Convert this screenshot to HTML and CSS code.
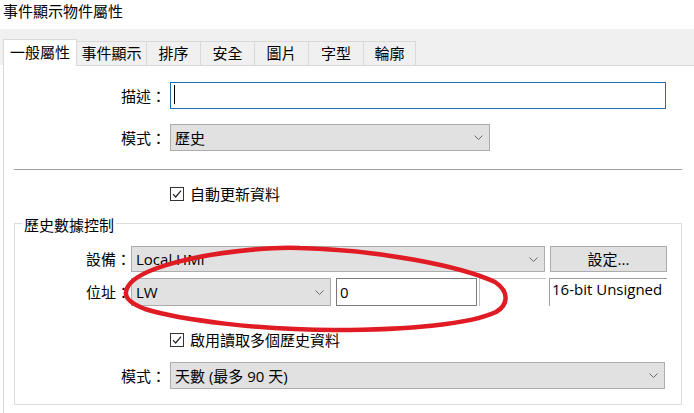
FILE: index.html
```html
<!doctype html>
<html>
   <head>
      <meta charset="utf-8">
      <title>事件顯示物件屬性</title>
      <link rel="stylesheet" href="styles.css">
   </head>
   <body>
      <div class="dialog-title">事件顯示物件屬性</div>

      <div class="tab-strip">
         <div class="tab tab-active">一般屬性</div>
         <div class="tab">事件顯示</div>
         <div class="tab">排序</div>
         <div class="tab">安全</div>
         <div class="tab">圖片</div>
         <div class="tab">字型</div>
         <div class="tab">輪廓</div>
      </div>

      <section class="panel">
         <div class="row row-top">
            <span class="label">描述：</span>
            <div class="textbox textbox-focus desc-box"><span class="caret"></span></div>
         </div>
         <div class="row row-top row-mode">
            <span class="label">模式：</span>
            <div class="combo mode-combo">
               <span>歷史</span>
               <svg class="chevron" width="9" height="5" viewBox="0 0 9 5"><path d="M0.5 0.5 L4.5 4.5 L8.5 0.5" /></svg>
            </div>
         </div>

         <div class="separator"></div>

         <div class="check-row check-auto">
            <svg class="checkbox" width="14" height="14" viewBox="0 0 14 14"><rect x="0.5" y="0.5" width="13" height="13" /><path d="M3 7.2 L5.7 10 L11 3.6" /></svg>
            <span>自動更新資料</span>
         </div>

         <div class="group">
            <div class="group-title">歷史數據控制</div>

            <div class="row row-device">
               <span class="label">設備：</span>
               <div class="combo device-combo">
                  <span>Local HMI</span>
                  <svg class="chevron" width="9" height="5" viewBox="0 0 9 5"><path d="M0.5 0.5 L4.5 4.5 L8.5 0.5" /></svg>
               </div>
               <div class="button">設定...</div>
            </div>

            <div class="row row-address">
               <span class="label">位址：</span>
               <div class="combo address-combo">
                  <span>LW</span>
                  <svg class="chevron" width="9" height="5" viewBox="0 0 9 5"><path d="M0.5 0.5 L4.5 4.5 L8.5 0.5" /></svg>
               </div>
               <div class="textbox address-box">0</div>
               <div class="static-box blank-box"></div>
               <div class="static-box type-box">16-bit Unsigned</div>
            </div>

            <div class="check-row check-multi">
               <svg class="checkbox" width="14" height="14" viewBox="0 0 14 14"><rect x="0.5" y="0.5" width="13" height="13" /><path d="M3 7.2 L5.7 10 L11 3.6" /></svg>
               <span>啟用讀取多個歷史資料</span>
            </div>

            <div class="row row-days">
               <span class="label">模式：</span>
               <div class="combo days-combo">
                  <span>天數 (最多 90 天)</span>
                  <svg class="chevron" width="9" height="5" viewBox="0 0 9 5"><path d="M0.5 0.5 L4.5 4.5 L8.5 0.5" /></svg>
               </div>
            </div>
         </div>
      </section>

      <!-- red hand-drawn mark over the address row -->
      <svg class="annotation" width="694" height="413" viewBox="0 0 694 413">
         <path d="M126 292 C128 276, 160 264, 210 255 C250 249, 280 247, 300 248 C380 250, 460 266, 495 282 C510 292, 508 305, 496 312 C470 324, 410 330, 335 330 C260 330, 180 320, 145 309 C132 304, 125 298, 126 292 Z" />
      </svg>
   </body>
</html>
```

FILE: styles.css
```css
/* General Reset */
* {
   margin: 0;
   padding: 0;
   box-sizing: border-box;
}

body {
   position: relative;
   width: 694px;
   height: 413px;
   overflow: hidden;
   font-family: "Open Sans", "Noto Sans CJK TC", sans-serif;
   font-size: 15px;
   color: #000000;
   background: #ffffff;
}

/* Window title */
.dialog-title {
   height: 29px;
   line-height: 22px;
   padding-left: 3px;
   background: #ffffff;
}

/* Tabs */
.tab-strip {
   display: flex;
   align-items: flex-end;
   height: 36px;
   padding-left: 3px;
   background: #f0f0f0;
}

.tab {
   position: relative;
   width: 55px;
   height: 24px;
   line-height: 22px;
   margin-left: -1px;
   text-align: center;
   white-space: nowrap;
   background: #f0f0f0;
   border: 1px solid #d9d9d9;
   border-bottom: none;
}

.tab:first-child {
   margin-left: 0;
   width: 74px;
}

.tab:nth-child(2) {
   width: 71px;
}

.tab:nth-child(6) {
   width: 56px;
}

.tab:nth-child(7) {
   width: 53px;
}

.tab-active {
   z-index: 2;
   height: 27px;
   line-height: 24px;
   margin-bottom: -1px;
   background: #ffffff;
}

/* Page panel */
.panel {
   height: 348px;
   margin-left: 3px;
   padding-top: 16px;
   background: #ffffff;
   border-left: 1px solid #d9d9d9;
   border-top: 1px solid #d9d9d9;
}

.row {
   display: flex;
   align-items: center;
   height: 27px;
}

.label {
   flex: none;
   white-space: nowrap;
   line-height: 20px;
}

.row-top {
   padding-left: 117px;
   column-gap: 4px;
}

.row-mode {
   margin-top: 15px;
}

.separator {
   width: 668px;
   height: 1px;
   margin: 18px 0 0 10px;
   background: #a0a0a0;
}

/* Checkboxes */
.check-row {
   display: flex;
   align-items: center;
   column-gap: 6px;
   height: 20px;
   line-height: 20px;
}

.checkbox rect {
   fill: #ffffff;
   stroke: #333333;
}

.checkbox path {
   fill: none;
   stroke: #222222;
   stroke-width: 1.2;
}

.check-auto {
   margin-top: 14px;
   padding-left: 166px;
}

.check-multi {
   margin-top: 24px;
   padding-left: 155px;
}

/* Controls */
.textbox {
   display: flex;
   align-items: center;
   height: 100%;
   padding-left: 3px;
   background: #ffffff;
   border: 1px solid #7a7a7a;
}

.textbox-focus {
   border-color: #1f6fb5;
}

.desc-box {
   width: 496px;
   align-items: flex-start;
}

.caret {
   width: 1px;
   height: 19px;
   margin-top: 2px;
   background: #000000;
}

.combo {
   display: flex;
   align-items: center;
   justify-content: space-between;
   height: 100%;
   padding: 0 6px 0 4px;
   white-space: nowrap;
   background: #e1e1e1;
   border: 1px solid #adadad;
}

.chevron path {
   fill: none;
   stroke: #6a6a6a;
   stroke-width: 1;
}

.mode-combo {
   width: 320px;
}

.button {
   width: 117px;
   height: 100%;
   margin-left: 5px;
   line-height: 24px;
   text-align: center;
   background: #e1e1e1;
   border: 1px solid #adadad;
}

/* Group box */
.group {
   width: 668px;
   margin: 19px 0 0 10px;
   padding-bottom: 15px;
   border: 1px solid #dcdcdc;
}

.group-title {
   width: fit-content;
   margin: -9px 0 0 7px;
   padding: 0 2px;
   line-height: 20px;
   background: #ffffff;
}

.row-device {
   height: 26px;
   margin-top: 11px;
   padding-left: 71px;
}

.device-combo {
   width: 414px;
}

.row-address {
   height: 28px;
   margin-top: 6px;
   padding-left: 71px;
}

.address-combo {
   width: 200px;
}

.address-box {
   width: 141px;
   margin-left: 5px;
}

.static-box {
   height: 100%;
   padding-left: 2px;
   line-height: 20px;
   white-space: nowrap;
   border-top: 1px solid #a0a0a0;
   border-left: 1px solid #a0a0a0;
}

.blank-box {
   width: 67px;
   margin-left: 2px;
   border-color: #c4c4c4;
}

.type-box {
   width: 118px;
   margin-left: 3px;
}

.row-days {
   margin-top: 12px;
   padding-left: 106px;
   column-gap: 4px;
}

.days-combo {
   width: 495px;
}

/* Annotation overlay */
.annotation {
   position: absolute;
   left: 0;
   top: 0;
   pointer-events: none;
}

.annotation path {
   fill: none;
   stroke: #e01b24;
   stroke-width: 4.5;
   stroke-linecap: round;
}
```
